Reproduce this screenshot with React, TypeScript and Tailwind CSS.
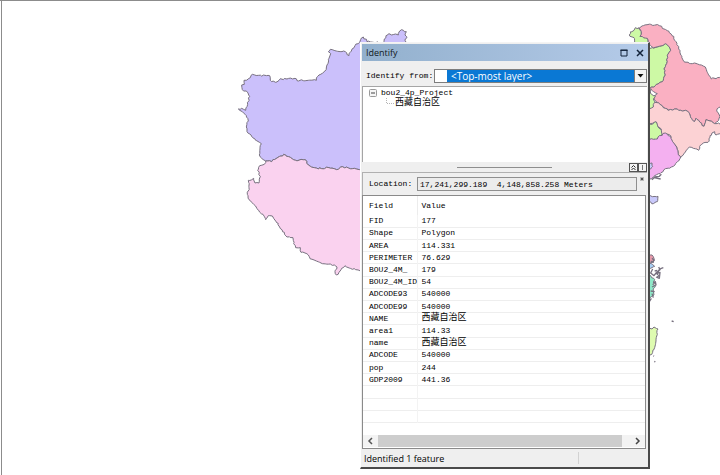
// src/App.tsx
import React from 'react';

type Point = [number, number];

interface Region {
  fill: string;
  points: string;
}

interface Field {
  name: string;
  value: string;
}

// Regions are digitised at 3x, relative to the origin of their group
const westRegions: Region[] = [
  {
    fill: '#cbc0fb',
    points:
      '475,66 478,54 483,44 492,38 500,42 512,39 520,42 524,30 530,26 538,32 544,32 540,42 546,50 540,58 545,66 545,450 408,446 382,443 352,437 335,446 312,440 290,443 268,440 250,432 240,416 212,418 196,409 176,400 156,411 140,422 122,420 110,412 103,402 105,384 109,368 92,358 78,342 66,332 64,318 70,300 64,284 52,272 40,264 50,262 62,268 68,250 74,226 64,210 52,206 50,192 58,190 57,178 76,170 82,160 100,163 134,164 136,178 152,184 166,173 186,174 210,172 216,179 274,178 282,162 300,150 306,132 310,116 317,98 310,92 316,85 334,90 356,90 372,104 376,94 390,74 404,64 415,48 426,62',
  },
  {
    fill: '#fad2ef',
    points:
      '122,420 140,422 156,411 176,400 196,409 212,418 240,416 250,432 268,440 290,443 312,440 335,446 352,437 382,443 408,446 440,446 440,770 408,754 392,746 376,742 360,734 350,742 342,754 334,762 330,752 336,738 328,732 292,728 274,720 256,714 250,702 240,696 228,694 226,680 212,680 206,668 204,650 186,648 178,634 164,618 152,600 142,585 130,584 122,596 114,580 98,566 86,550 72,536 67,520 72,500 70,478 86,472 90,486 102,486 106,466 98,448 104,434 118,430',
  },
];

const eastRegions: Region[] = [
  { fill: '#cdf9a5', points: '150,112 172,108 186,104 196,98 206,106 212,118 202,134 200,158 192,174 196,192 190,208 180,214 166,224 150,232 140,232 140,100' },
  { fill: '#cdf9a5', points: '88,72 92,62 102,58 106,50 116,52 124,62 120,76 140,80 144,100 120,100 104,96 102,80 90,76' },
  { fill: '#fab0c2', points: '116,50 130,44 152,40 178,44 192,54 206,60 216,74 228,92 236,114 246,136 252,152 268,157 284,156 304,162 316,168 322,184 334,204 352,200 370,194 370,285 356,290 350,300 358,312 356,328 344,338 330,330 318,326 312,346 300,334 288,322 282,332 272,320 262,300 242,298 224,294 204,298 190,290 176,276 168,272 162,256 172,248 158,240 150,232 166,224 180,214 190,208 196,192 192,174 200,158 202,134 212,118 206,106 196,98 186,104 160,110 144,96 142,82 120,76 124,62' },
  { fill: '#cdf9a5', points: '140,232 154,234 152,248 166,254 160,264 166,276 158,290 140,294' },
  { fill: '#fcd2d4', points: '140,294 160,288 164,274 176,276 190,290 204,298 224,294 242,298 262,300 272,320 282,332 288,322 300,334 312,346 318,326 330,330 344,338 356,336 370,342 370,366 348,372 344,362 336,366 330,380 324,394 310,396 302,402 296,418 280,412 268,408 256,424 242,440 234,430 230,408 216,390 212,374 196,368 184,372 184,354 172,346 170,334 140,340' },
  { fill: '#cdf9a5', points: '140,340 160,338 168,332 174,348 184,358 186,372 176,378 172,388 140,382' },
  { fill: '#f4b0f0', points: '140,386 172,384 178,374 196,366 212,376 218,392 230,408 234,430 242,438 236,450 220,466 208,472 192,476 180,488 164,494 154,504 140,502' },
  { fill: '#c9c9fb', points: '140,452 156,456 158,466 152,474 140,474' },
  { fill: '#c9c9fb', points: '140,556 174,556 172,572 160,578 140,570' },
  { fill: '#e79bab', points: '140,730 156,732 162,742 160,752 140,756' },
  { fill: '#a9d0f5', points: '140,756 154,758 164,766 152,772 140,772' },
  { fill: '#8fe8c8', points: '140,790 152,794 164,806 158,820 166,826 160,840 162,852 150,860 140,856' },
  { fill: '#defbb0', points: '140,952 156,954 162,948 174,954 172,970 168,990 164,1010 158,1024 150,1032 140,1026' },
];

const islands =
  'M156,506l8,-8l14,-2l6,-6M162,500l20,4M166,788l6,-6M170,800l8,-8M164,780l8,-2M160,812l6,6M158,774l-6,12l10,8l6,-8l12,-10l-4,-8M172,792l4,-14l8,-6l6,-2M168,798l10,4l2,-18l-12,4M156,828l12,-6l-2,-10l-6,4M152,840l12,2M156,848l4,12M154,756l8,-8l-6,-6M152,750l10,4M154,862l-6,10M215,930l6,2M160,1034l2,2M163,1051l3,2';

const fields: Field[] = [
  { name: 'FID', value: '177' },
  { name: 'Shape', value: 'Polygon' },
  { name: 'AREA', value: '114.331' },
  { name: 'PERIMETER', value: '76.629' },
  { name: 'BOU2_4M_', value: '179' },
  { name: 'BOU2_4M_ID', value: '54' },
  { name: 'ADCODE93', value: '540000' },
  { name: 'ADCODE99', value: '540000' },
  { name: 'NAME', value: '西藏自治区' },
  { name: 'area1', value: '114.33' },
  { name: 'name', value: '西藏自治区' },
  { name: 'ADCODE', value: '540000' },
  { name: 'pop', value: '244' },
  { name: 'GDP2009', value: '441.36' },
  { name: '', value: '' },
  { name: '', value: '' },
  { name: '', value: '' },
];

const noise = (x: number, y: number) => {
  const n = Math.sin(Math.round(x) * 12.9898 + Math.round(y) * 78.233) * 43758.5453;
  return (n - Math.floor(n) - 0.5) * 5;
};

// Adds small steps between the vertices so the borders look surveyed
const toPath = (points: string) => {
  const list = points.split(' ').map((p) => p.split(',').map(Number) as Point);
  const out: string[] = [];
  list.forEach(([x, y], i) => {
    const [nx, ny] = list[(i + 1) % list.length];
    const steps = Math.max(1, Math.round(Math.hypot(nx - x, ny - y) / 6));
    out.push(`${x},${y}`);
    for (let s = 1; s < steps; s++) {
      const px = x + ((nx - x) * s) / steps;
      const py = y + ((ny - y) * s) / steps;
      out.push(`${(px + noise(px, py)).toFixed(1)},${(py + noise(py, px)).toFixed(1)}`);
    }
  });
  return `M${out.join('L')}Z`;
};

const MapCanvas: React.FC = () => {
  return (
    <svg
      viewBox="0 0 720 475"
      preserveAspectRatio="xMinYMin slice"
      className="absolute inset-0 w-full h-full"
      stroke="#77707f"
      strokeWidth="3"
      strokeLinejoin="round"
      aria-hidden="true"
    >
      <g transform="translate(225 20) scale(0.33333)">
        {westRegions.map((region, i) => (
          <path key={i} d={toPath(region.points)} fill={region.fill} />
        ))}
      </g>
      <g transform="translate(600 10) scale(0.33333)">
        {eastRegions.map((region, i) => (
          <path key={i} d={toPath(region.points)} fill={region.fill} />
        ))}
        <path d={islands} fill="none" strokeWidth="4" />
      </g>
    </svg>
  );
};

const TitleBar: React.FC = () => {
  return (
    <div className="flex items-center h-[17px] px-1 gap-1 bg-gradient-to-r from-[#92b0cd] to-[#b5cbe9]">
      <h1 className="flex-1 font-['Open_Sans','Noto_Sans',sans-serif] text-[9px] leading-none text-[#101820]">Identify</h1>
      <button aria-label="Maximize" className="flex">
        <svg width="8" height="8" viewBox="0 0 8 8" fill="none" stroke="#13233a">
          <path d="M1 1v6h6V1" />
          <path d="M0.500 1.200h7" strokeWidth="1.500" />
        </svg>
      </button>
      <button aria-label="Close" className="flex ml-1">
        <svg width="8" height="8" viewBox="0 0 8 8" fill="none" stroke="#13233a" strokeWidth="1.500">
          <path d="M1 1l6 6M7 1l-6 6" />
        </svg>
      </button>
    </div>
  );
};

const LayerPicker: React.FC = () => {
  return (
    <div className="flex items-center h-[25px] pl-1 pr-px pt-1">
      <label htmlFor="layer" className="w-[68px] whitespace-nowrap">
        Identify from:
      </label>
      <div className="flex flex-1 h-[14px] border border-[#7d7d7d] bg-white">
        <select
          id="layer"
          className="flex-1 min-w-0 ml-3 pl-1 appearance-none bg-[#0a78d4] text-white font-['Open_Sans','Noto_Sans',sans-serif] text-[10px] leading-3"
        >
          <option>&lt;Top-most layer&gt;</option>
        </select>
        <span className="flex items-center justify-center w-3 border-l border-[#7d7d7d] bg-[#f4f4f4]">
          <svg width="7" height="4" viewBox="0 0 7 4">
            <path d="M0.500 0h6L3.500 3.500z" fill="#111" />
          </svg>
        </span>
      </div>
    </div>
  );
};

const ResultTree: React.FC = () => {
  return (
    <ul className="h-[76px] mr-px pl-[6px] border-t border-l border-[#a5a5a5] bg-white">
      <li>
        <div className="flex items-center h-[11px] gap-1">
          <svg width="8" height="8" viewBox="0 0 8 8" fill="#f6f6f6" stroke="#9a9a9a">
            <rect x="0.500" y="0.500" width="7" height="7" rx="1" />
            <path d="M2 4h4" stroke="#444" />
          </svg>
          bou2_4p_Project
        </div>
        <ul className="pl-4">
          <li className="flex items-center h-[11px] gap-px">
            <svg width="9" height="11" viewBox="0 0 9 11" fill="none" stroke="#b5b5b5" strokeDasharray="1 1">
              <path d="M1.500 0v5.500H9" />
            </svg>
            <span className="text-[9px]">西藏自治区</span>
          </li>
        </ul>
      </li>
    </ul>
  );
};

const Splitter: React.FC = () => {
  return (
    <div className="grid grid-cols-3 items-center h-[10px] mr-px">
      <span />
      <hr className="border-[#8e8e8e]" />
      <div className="flex justify-end">
        <button aria-label="Collapse" className="flex">
          <svg width="9" height="9" viewBox="0 0 9 9" fill="none" stroke="#2b2b2b">
            <rect x="0.500" y="0.500" width="8" height="8" fill="#f4f4f4" stroke="#555" />
            <path d="M2.500 4.500l2-2 2 2M2.500 7l2-2 2 2" />
          </svg>
        </button>
        <button aria-label="Split" className="flex">
          <svg width="9" height="9" viewBox="0 0 9 9" fill="none" stroke="#555">
            <rect x="0.500" y="0.500" width="8" height="8" fill="#f4f4f4" />
            <path d="M4.500 2v5" stroke="#777" />
          </svg>
        </button>
      </div>
    </div>
  );
};

const LocationBar: React.FC = () => {
  return (
    <div className="flex items-center h-[23px] mr-px pl-[6px] border-t border-l border-[#b0b0b0]">
      <label htmlFor="location" className="w-12">
        Location:
      </label>
      <input
        id="location"
        readOnly
        defaultValue="17,241,299.189  4,148,858.258 Meters"
        className="flex-1 min-w-0 h-[14px] px-[2px] border border-[#8f8f8f] bg-[#ececec] outline-none"
      />
      <button aria-label="Location options" className="flex self-start w-[10px] pt-1 justify-center">
        <svg width="4" height="4" viewBox="0 0 4 4" fill="#555">
          <path d="M0 0h4v4H0z" fill="#bbb" />
          <path d="M1 1h2v2H1z" />
        </svg>
      </button>
    </div>
  );
};

const FieldTable: React.FC = () => {
  return (
    <div className="mr-[2px] border border-[#8a8a8a] bg-white">
      <table className="w-full h-[227px] table-fixed border-collapse text-left">
        <thead>
          <tr className="h-[19px]">
            <th className="w-[54px] pl-[6px] pr-0 py-0 font-normal border-r border-[#ececec]">Field</th>
            <th className="pl-[4px] py-0 font-normal">Value</th>
          </tr>
        </thead>
        <tbody>
          {fields.map((field, i) => (
            <tr key={i} className="h-3 border-b border-[#eeeeee]">
              <td className="pl-[6px] p-0 whitespace-nowrap border-r border-[#f3f3f3]">{field.name}</td>
              <td className={field.value.startsWith('西') ? 'pl-[4px] p-0 text-[9px]' : 'pl-[4px] p-0'}>{field.value}</td>
            </tr>
          ))}
        </tbody>
      </table>
      <div className="flex items-center h-3 mt-3 gap-1 px-1 bg-[#f3f3f3]">
        <button aria-label="Scroll left" className="flex w-[7px]">
          <svg width="7" height="8" viewBox="0 0 7 8" fill="none" stroke="#555" strokeWidth="1.500">
            <path d="M5 1L2 4l3 3" />
          </svg>
        </button>
        <div className="flex-1 h-full mr-2 bg-[#cdcdcd]" />
        <button aria-label="Scroll right" className="flex">
          <svg width="7" height="8" viewBox="0 0 7 8" fill="none" stroke="#444" strokeWidth="1.500">
            <path d="M2 1l3 3-3 3" />
          </svg>
        </button>
      </div>
      <div className="h-px" />
    </div>
  );
};

const StatusBar: React.FC = () => {
  return (
    <div className="flex items-center h-[18px] pl-[2px] font-['Open_Sans','Noto_Sans',sans-serif] text-[9px]">
      <span className="flex-1">Identified 1 feature</span>
      <span className="w-[70px] h-3 border-l border-[#d2d2d2]" />
    </div>
  );
};

const App: React.FC = () => {
  return (
    <main className="relative min-h-screen overflow-hidden bg-white border-t border-[#8c8c8c] pl-px">
      <MapCanvas />
      <span className="absolute left-px inset-y-0 border-l border-[#8c8c8c]" />
      <section
        aria-label="Identify"
        className="absolute left-1/2 top-[41px] w-[290px] pl-px pt-px border-l border-t border-l-white border-t-[#f4f4f4] border-r-2 border-r-[#4a4a4a] border-b-2 border-b-[#4a4a4a] bg-[#efefef] text-black font-['Liberation_Mono','Noto_Sans_CJK_SC',monospace] text-[8px] leading-none"
      >
        <TitleBar />
        <LayerPicker />
        <ResultTree />
        <Splitter />
        <LocationBar />
        <FieldTable />
        <StatusBar />
      </section>
    </main>
  );
};

export default App;
